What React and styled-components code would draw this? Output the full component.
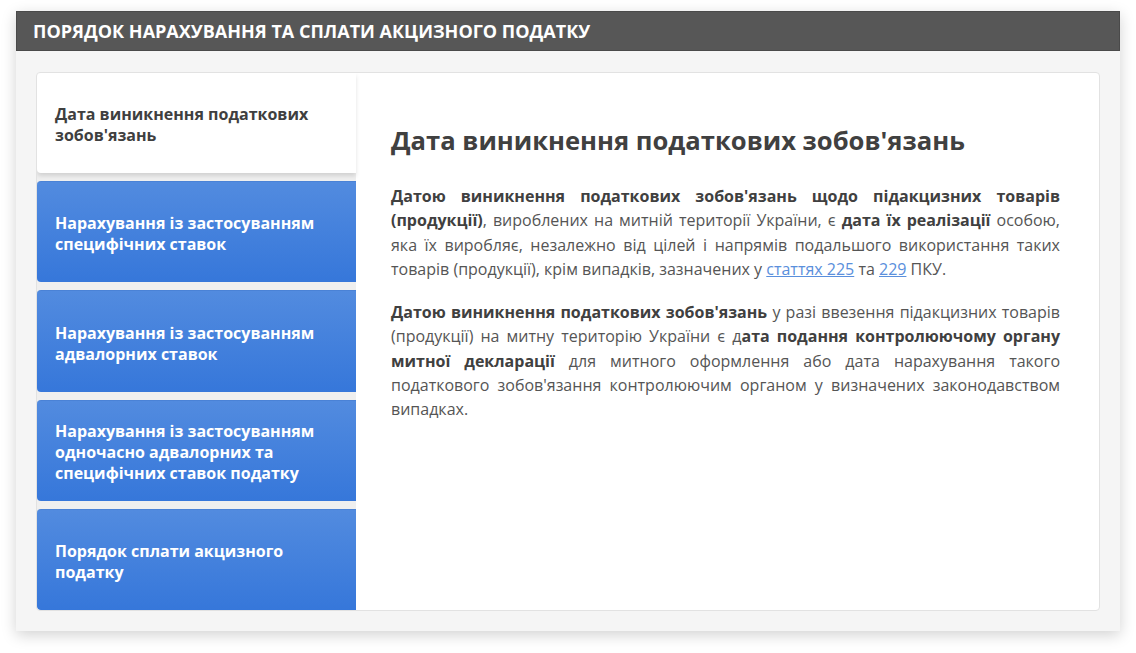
import React from 'react';
import styled, { createGlobalStyle } from 'styled-components';

const GlobalStyle = createGlobalStyle`
  html, body {
    margin: 0;
    padding: 0;
    background: #ffffff;
  }
  body {
    font-family: "Open Sans", "Noto Sans", sans-serif;
  }
`;

const tabs = [
  { id: 'date', title: "Дата виникнення податкових зобов'язань" },
  { id: 'specific', title: 'Нарахування із застосуванням специфічних ставок' },
  { id: 'advalorem', title: 'Нарахування із застосуванням адвалорних ставок' },
  { id: 'mixed', title: 'Нарахування із застосуванням одночасно адвалорних та специфічних ставок податку' },
  { id: 'payment', title: 'Порядок сплати акцизного податку' },
];

const App = () => {
  const active = 'date';

  return (
    <>
      <GlobalStyle />
      <Page>
        <Card>
          <CardHeader>Порядок нарахування та сплати акцизного податку</CardHeader>
          <CardBody>
            <TabsBox>
              <TabList>
                {tabs.map(tab => (
                  <Tab key={tab.id} $active={tab.id === active}>
                    {tab.title}
                  </Tab>
                ))}
              </TabList>

              <Panel>
                <PanelTitle>Дата виникнення податкових зобов'язань</PanelTitle>
                <Paragraph>
                  <b>Датою виникнення податкових зобов'язань щодо підакцизних товарів (продукції)</b>,
                  вироблених на митній території України, є <b>дата їх реалізації</b> особою, яка їх
                  виробляє, незалежно від цілей і напрямів подальшого використання таких товарів
                  (продукції), крім випадків, зазначених у <Link href="#">статтях 225</Link> та{' '}
                  <Link href="#">229</Link> ПКУ.
                </Paragraph>
                <Paragraph>
                  <b>Датою виникнення податкових зобов'язань</b> у разі ввезення підакцизних товарів
                  (продукції) на митну територію України є д<b>ата подання контролюючому органу митної
                  декларації</b> для митного оформлення або дата нарахування такого податкового
                  зобов'язання контролюючим органом у визначених законодавством випадках.
                </Paragraph>
              </Panel>
            </TabsBox>
          </CardBody>
        </Card>
      </Page>
    </>
  );
};

const Page = styled.div`
  padding: 11px 16px 21px 16px;
`;

const Card = styled.div`
  width: 1104px;
  background: #f5f5f5;
  box-shadow: 0 4px 14px rgba(0, 0, 0, 0.18);
`;

const CardHeader = styled.div`
  height: 40px;
  display: flex;
  align-items: center;
  padding-left: 16px;
  background: #575757;
  border: 1px solid #4a4a4a;
  box-sizing: border-box;
  color: #ffffff;
  font-size: 18px;
  font-weight: 700;
  text-transform: uppercase;
`;

const CardBody = styled.div`
  padding: 21px 20px 20px 20px;
`;

const TabsBox = styled.div`
  display: flex;
  height: 539px;
  box-sizing: border-box;
  background: #ffffff;
  border: 1px solid #e2e2e2;
  border-radius: 4px;
  overflow: hidden;
`;

const TabList = styled.div`
  width: 319px;
  flex-shrink: 0;
  display: flex;
  flex-direction: column;
  gap: 8px;
  background: #efefef;
`;

const Tab = styled.div`
  flex: 1;
  display: flex;
  align-items: center;
  padding: 4px 30px 0 18px;
  border-radius: 4px 0 0 4px;
  font-size: 16px;
  font-weight: 700;
  line-height: 21px;
  cursor: pointer;
  color: ${p => (p.$active ? '#3f3f3f' : '#ffffff')};
  background: ${p => (p.$active ? '#ffffff' : 'linear-gradient(to bottom, #528bdf, #3677da)')};
  box-shadow: ${p => (p.$active ? '0 3px 4px rgba(0, 0, 0, 0.12)' : 'none')};
  border-top: ${p => (p.$active ? 'none' : '1px solid #4a82d6')};
  position: relative;
  z-index: ${p => (p.$active ? 1 : 0)};
`;

const Panel = styled.div`
  flex: 1;
  padding: 52px 39px 30px 35px;
  color: #555555;
`;

const PanelTitle = styled.h2`
  margin: 0 0 28px 0;
  font-size: 25.6px;
  line-height: 31px;
  font-weight: 700;
  color: #404040;
`;

const Paragraph = styled.p`
  margin: 0 0 19px 0;
  font-size: 16px;
  line-height: 24.3px;
  text-align: justify;

  b {
    color: #404040;
    font-weight: 700;
  }
`;

const Link = styled.a`
  color: #5a8fdc;
  text-decoration: underline;
`;

export default App;
